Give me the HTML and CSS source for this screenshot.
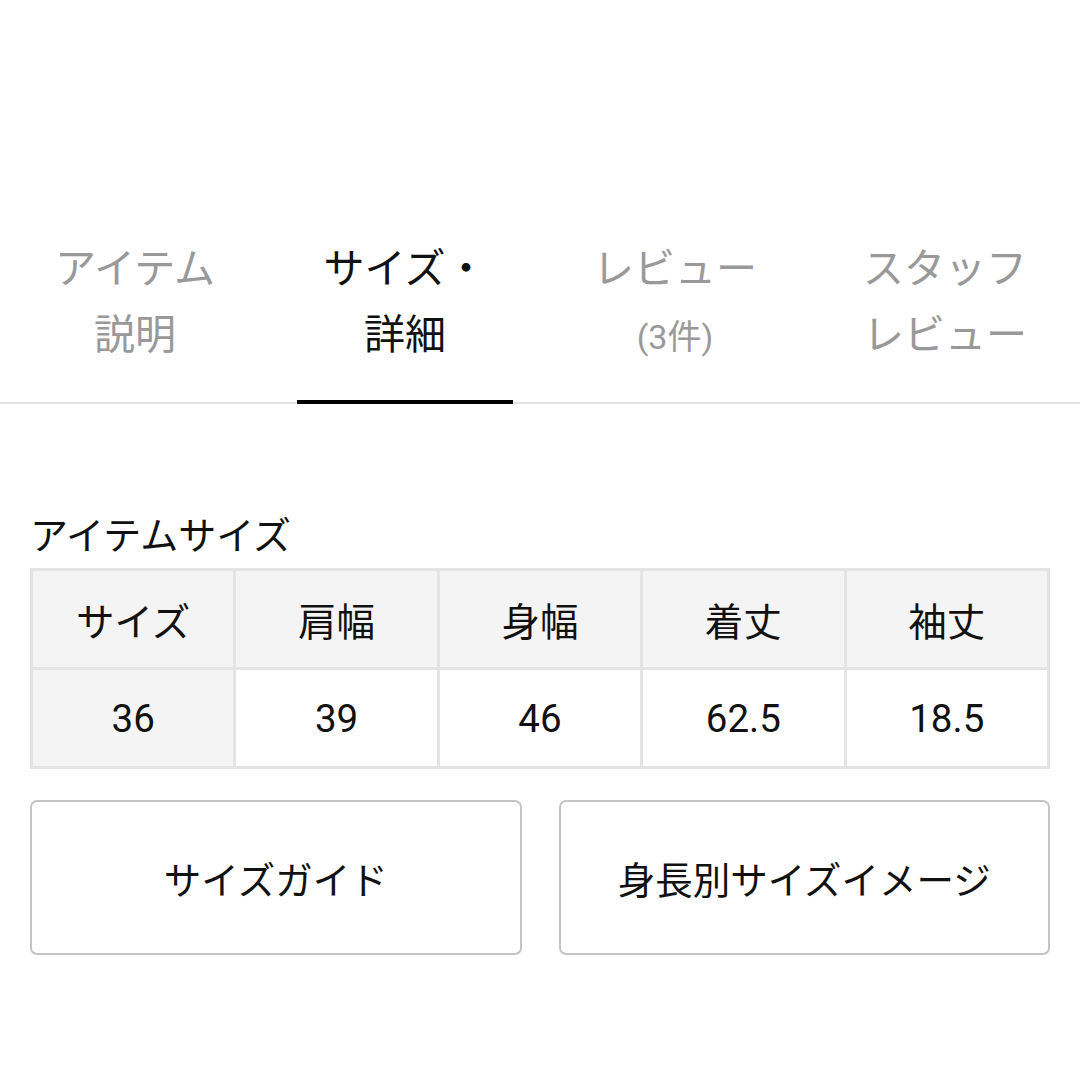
FILE: index.html
```html
<!DOCTYPE html>
<html lang="ja">
<head>
<meta charset="utf-8">
<link rel="stylesheet" href="styles.css">
</head>
<body>
<div class="page">
  <nav class="tabs">
    <div class="tab"><div class="tab-label">アイテム<br>説明</div></div>
    <div class="tab active"><div class="tab-label">サイズ・<br>詳細</div></div>
    <div class="tab"><div class="tab-label">レビュー<br><span class="count">(3件)</span></div></div>
    <div class="tab"><div class="tab-label">スタッフ<br>レビュー</div></div>
  </nav>
  <section class="content">
    <h2 class="section-title">アイテムサイズ</h2>
    <table class="size-table">
      <tr class="head">
        <th>サイズ</th><th>肩幅</th><th>身幅</th><th>着丈</th><th>袖丈</th>
      </tr>
      <tr class="body">
        <th>36</th><td>39</td><td>46</td><td>62.5</td><td>18.5</td>
      </tr>
    </table>
    <div class="buttons">
      <button class="btn">サイズガイド</button>
      <button class="btn">身長別サイズイメージ</button>
    </div>
  </section>
</div>
</body>
</html>
```

FILE: styles.css
```css
html, body {
  margin: 0;
  padding: 0;
  background: #fff;
}
body {
  font-family: "Noto Sans CJK JP", "Roboto", sans-serif;
  color: #111;
}
.page {
  padding-top: 232px;
}
.tabs {
  display: flex;
  border-bottom: 2px solid #e2e2e2;
}
.tab {
  flex: 1;
  padding: 0 27px;
  display: flex;
  justify-content: center;
}
.tab-label {
  width: 100%;
  text-align: center;
  font-size: 41px;
  line-height: 66px;
  color: #999;
  padding-bottom: 30px;
  border-bottom: 4px solid transparent;
  margin-bottom: -2px;
}
.tab.active .tab-label {
  color: #111;
  border-bottom-color: #000;
}
.count {
  font-family: "Roboto", "Noto Sans CJK JP", sans-serif;
  font-size: 34px;
}
.content {
  padding: 0 30px;
}
.section-title {
  margin: 103px 0 0;
  font-size: 38px;
  font-weight: normal;
  line-height: 52px;
  color: #111;
  padding-left: 0;
}
.size-table {
  width: 1020px;
  margin-top: 9px;
  border-collapse: collapse;
  table-layout: fixed;
}
.size-table th, .size-table td {
  border: 3px solid #e4e4e4;
  height: 96px;
  text-align: center;
  font-weight: normal;
  font-size: 38.5px;
  color: #111;
  padding: 0;
}
.size-table .head th {
  background: #f4f4f4;
}
.size-table .body th {
  background: #f4f4f4;
}
.size-table .body th, .size-table .body td {
  font-family: "Roboto", "Noto Sans CJK JP", sans-serif;
}
.buttons {
  display: flex;
  gap: 37px;
  margin-top: 31px;
}
.btn {
  flex: 1;
  height: 155px;
  background: #fff;
  border: 2px solid #c4c4c4;
  border-radius: 7px;
  font-family: "Noto Sans CJK JP", sans-serif;
  font-size: 37.5px;
  color: #111;
  padding: 0;
}
```
